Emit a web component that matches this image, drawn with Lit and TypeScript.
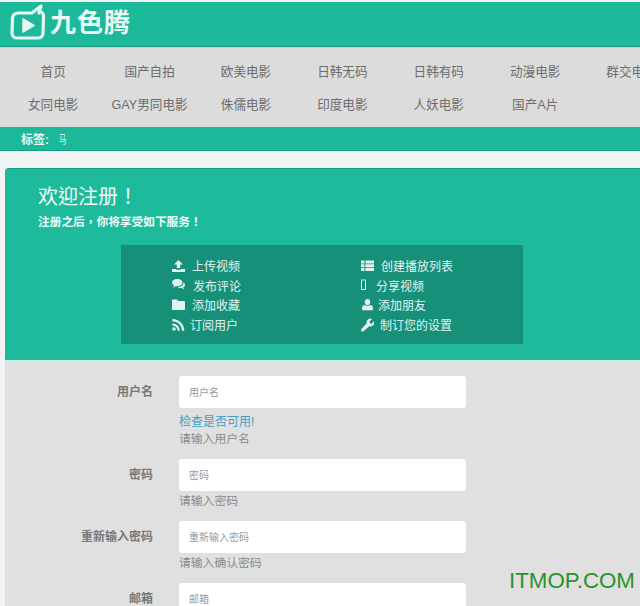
import {LitElement, css, html, svg} from 'lit'
import {customElement} from 'lit/decorators.js'

const icons: Record<string, unknown> = {
    upload: svg`<path d="M6.5 1 11 5.400H8.200V9H4.800V5.400H2ZM0 10H4.200V10.800H8.800V10H13V13H0Z"/>`,
    comments: svg`<path d="M5.5 1C8.5 1 10.5 2.6 10.5 4.6S8.5 8.2 5.5 8.2C4.9 8.2 4.4 8.1 3.9 8 3 8.8 1.9 9.3 .9 9.4 1.6 8.7 2 8 2 7.3.7 6.7 0 5.700 0 4.600 0 2.600 2.500 1 5.500 1ZM11.300 4.500C12.400 5.100 13 6 13 7 13 8 12.300 8.800 11.300 9.300 11.300 10 11.700 10.600 12.300 11.200 11.300 11.100 10.400 10.700 9.700 10 8 10.300 6.400 9.900 5.500 9 8.800 9 11.600 7.500 11.300 4.500Z"/>`,
    folder: svg`<path d="M1 1.500H5L6.200 3H12C12.600 3 13 3.400 13 4V11C13 11.600 12.600 12 12 12H1C.4 12 0 11.600 0 11V2.500C0 1.900.4 1.500 1 1.500Z"/>`,
    rss: svg`<circle cx="2" cy="11" r="1.800"/><path d="M.3 5.400V7.500C3.400 7.500 5.600 9.800 5.600 12.800H7.800C7.800 8.600 4.500 5.400.3 5.400ZM.3 1V3.200C5.800 3.200 10 7.400 10 12.800H12.300C12.300 6.100 7 1 .3 1Z"/>`,
    list: svg`<path d="M0 1.500H3.400V4.400H0ZM4.400 1.500H13V4.400H4.400ZM0 5.300H3.400V8.200H0ZM4.400 5.300H13V8.200H4.400ZM0 9.100H3.400V12H0ZM4.400 9.100H13V12H4.400Z"/>`,
    box: svg`<path fill-rule="evenodd" d="M0 1.500H5V12H0ZM1 2.500V11H4V2.500Z"/>`,
    user: svg`<path d="M6.500 1C8.100 1 9.200 2.300 9.200 4 9.200 5.700 8.100 7.200 6.500 7.200S3.800 5.700 3.800 4C3.800 2.300 4.900 1 6.500 1ZM4 7C5.400 8.300 7.600 8.300 9 7 11 7.200 12 8.400 12 10.300V11C12 11.800 11.500 12.300 10.700 12.300H2.300C1.500 12.300 1 11.800 1 11V10.300C1 8.400 2 7.200 4 7Z"/>`,
    wrench: svg`<path d="M9.500 .5C10.200 .5 10.800 .7 11.200 1L8.500 3.500 9 5.200 10.700 5.700 13 3C13.300 3.500 13.400 4 13.400 4.500 13.400 6.700 11.600 8.400 9.500 8.400 9 8.400 8.600 8.300 8.200 8.200L2.900 13C2.100 13.700 1 13.700.4 13 -.2 12.300-.1 11.300.6 10.600L5.700 5.600C5.600 5.200 5.500 4.900 5.500 4.500 5.500 2.300 7.300 .5 9.500 .5Z"/>`,
}

const nav_rows = [
    ['首页', '国产自拍', '欧美电影', '日韩无码', '日韩有码', '动漫电影', '群交电影'],
    ['女同电影', 'GAY男同电影', '侏儒电影', '印度电影', '人妖电影', '国产A片'],
]

// gap = distance from the icon's left edge to the text, it differs per row in the original
const left_features = [
    {icon: 'upload', text: '上传视频', gap: 20},
    {icon: 'comments', text: '发布评论', gap: 21},
    {icon: 'folder', text: '添加收藏', gap: 20},
    {icon: 'rss', text: '订阅用户', gap: 18},
]

const right_features = [
    {icon: 'list', text: '创建播放列表', gap: 20},
    {icon: 'box', text: '分享视频', gap: 15},
    {icon: 'user', text: '添加朋友', gap: 17},
    {icon: 'wrench', text: '制订您的设置', gap: 19},
]

const fields = [
    {label: '用户名', placeholder: '用户名', check: true, help: '请输入用户名'},
    {label: '密码', placeholder: '密码', check: false, help: '请输入密码'},
    {label: '重新输入密码', placeholder: '重新输入密码', check: false, help: '请输入确认密码'},
    {label: '邮箱', placeholder: '邮箱', check: false, help: ''},
]

@customElement('app-root')
export class App_Root extends LitElement
{
    feature_list(items: typeof left_features)
    {
        return html`<ul class="features">
            ${items.map(f => html`<li style="grid-template-columns: ${f.gap}px auto">
                <svg class="icon" viewBox="0 0 13 14" width="13" height="14" fill="currentColor">${icons[f.icon]}</svg>
                <span>${f.text}</span>
            </li>`)}
        </ul>`
    }

    render()
    {
        return html`
            <header class="top">
                <svg class="logo" viewBox="0 0 38 38" width="38" height="38" fill="none" stroke="#e6f7f2" stroke-width="3.200" stroke-linejoin="round" stroke-linecap="round">
                    <path d="M20 9H8C5 9 3 11 2.500 14L2 29C2 32 4 34 7 34H28C31 34 33 32 33 29L33.500 13C33.500 11 33 9.500 32 8.500"/>
                    <path d="M22 9 31 2 29 9"/>
                    <path d="M13 15 24 21.500 13 28Z" fill="#e6f7f2" stroke-width="1.500"/>
                </svg>
                <span class="brand">九色腾</span>
            </header>
            <nav class="nav">
                ${nav_rows.map(row => html`<div class="nav-row">${row.map(t => html`<a>${t}</a>`)}</div>`)}
            </nav>
            <div class="tags"><b>标签:</b><span class="tag">马</span></div>
            <main class="card">
                <section class="hero">
                    <h1>欢迎注册！</h1>
                    <p>注册之后，你将享受如下服务！</p>
                    <div class="panel">
                        ${this.feature_list(left_features)}
                        ${this.feature_list(right_features)}
                    </div>
                </section>
                <form class="form">
                    ${fields.map(f => html`<div class="field">
                        <label>${f.label}</label>
                        <div class="control">
                            <input type="text" placeholder="${f.placeholder}">
                            ${f.check ? html`<a class="check">检查是否可用!</a>` : ''}
                            ${f.help ? html`<span class="help">${f.help}</span>` : ''}
                        </div>
                    </div>`)}
                </form>
            </main>
            <div class="watermark">ITMOP.COM</div>
        `
    }

    static styles = css`
        :host
        {
            display: block;
            position: relative;
            width: 640px;
            height: 606px;
            overflow: hidden;
            padding-top: 2px;
            box-sizing: border-box;
            background: #f1f3f4;
            font-family: "Liberation Sans", "Noto Sans CJK SC", sans-serif;
            font-size: 12px;
        }

        .top
        {
            height: 45px;
            display: flex;
            align-items: center;
            gap: 2px;
            padding: 0 0 2px 10px;
            box-sizing: border-box;
            background: #1bb999;
            border-bottom: 1px solid #15997f;
        }

        .logo
        {
            flex: none;
        }

        .brand
        {
            color: #eef9f6;
            font-size: 26px;
            font-weight: 700;
            letter-spacing: 1px;
            line-height: 1;
        }

        .nav
        {
            height: 80px;
            padding: 6px 0 0 5px;
            box-sizing: border-box;
            background: #dcdcdc;
            border-top: 1px solid #a9e3d6;
            overflow: hidden;
            font-size: 12.600px;
        }

        .nav-row
        {
            display: grid;
            grid-template-columns: repeat(7, 96.4px);
            height: 33px;
            align-items: center;
        }

        .nav a
        {
            text-align: center;
            color: #6d6d6d;
            white-space: nowrap;
        }

        .tags
        {
            height: 24px;
            display: flex;
            align-items: center;
            gap: 10px;
            padding-left: 21px;
            background: #1bb999;
            border-bottom: 1px solid #15a085;
            box-sizing: border-box;
            color: #eef9f6;
            font-size: 12px;
        }

        .tag
        {
            display: inline-block;
            transform: scaleX(0.6);
            transform-origin: left center;
        }

        .card
        {
            margin: 17px 0 0 5px;
        }

        .hero
        {
            height: 192px;
            padding: 15px 0 0 33px;
            box-sizing: border-box;
            background: #1dbb9b;
            border-top: 1px solid #15a085;
            border-radius: 4px 0 0 0;
            color: #f2fbf9;
            font-family: "Liberation Sans", "Noto Sans CJK TC", sans-serif;
        }

        h1
        {
            margin: 0;
            font-size: 20px;
            font-weight: 400;
            line-height: 27px;
        }

        p
        {
            margin: 3px 0 0;
            font-size: 11.700px;
            font-weight: 700;
            line-height: 16px;
        }

        .panel
        {
            width: 402px;
            height: 99px;
            margin: 15px 0 0 83px;
            padding: 11px 0 0 51px;
            box-sizing: border-box;
            display: grid;
            grid-template-columns: 189px auto;
            background: #17907a;
            color: #e3f3ef;
            font-family: "Liberation Sans", "Noto Sans CJK SC", sans-serif;
            font-size: 12px;
        }

        .features
        {
            margin: 0;
            padding: 0;
            list-style: none;
        }

        .features li
        {
            display: grid;
            align-items: center;
            height: 19.600px;
        }

        .icon
        {
            display: block;
        }

        .form
        {
            min-height: 300px;
            padding-top: 15px;
            background: #e0e0e0;
            border-top: 1px solid #bdeee2;
        }

        .field
        {
            display: grid;
            grid-template-columns: 148px 287px;
            column-gap: 26px;
            margin-bottom: 11px;
        }

        label
        {
            text-align: right;
            color: #777;
            font-weight: 700;
            line-height: 32px;
        }

        .control
        {
            display: flex;
            flex-direction: column;
        }

        input
        {
            width: 100%;
            height: 32px;
            box-sizing: border-box;
            padding: 0 10px;
            border: 0;
            border-radius: 3px;
            background: #fff;
            font: inherit;
            font-size: 10px;
            outline: none;
        }

        input::placeholder
        {
            color: #999;
        }

        .check
        {
            margin-top: 6px;
            color: #3f9fc4;
            line-height: 17px;
        }

        .help
        {
            margin-top: 2px;
            color: #8a8a8a;
            font-size: 11.800px;
            line-height: 17px;
        }

        .check + .help
        {
            margin-top: 0;
        }

        .watermark
        {
            position: absolute;
            left: 509px;
            top: 569px;
            color: #2a922c;
            font-size: 22.300px;
            line-height: 24px;
        }
    `
}

declare global
{
    interface HTMLElementTagNameMap
    {
        'app-root': App_Root
    }
}
